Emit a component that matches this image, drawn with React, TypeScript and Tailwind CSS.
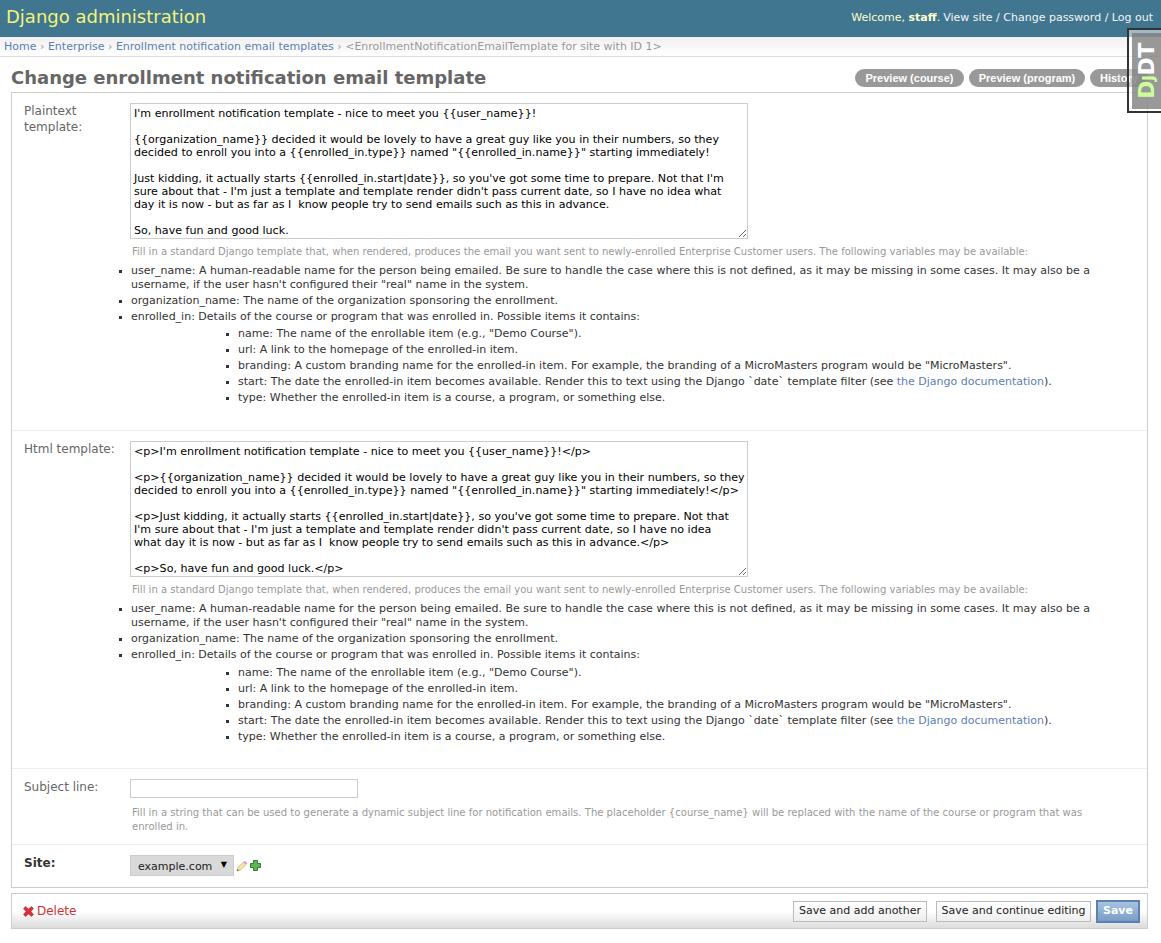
import React from 'react';

const plaintext = `I'm enrollment notification template - nice to meet you {{user_name}}!

{{organization_name}} decided it would be lovely to have a great guy like you in their numbers, so they
decided to enroll you into a {{enrolled_in.type}} named "{{enrolled_in.name}}" starting immediately!

Just kidding, it actually starts {{enrolled_in.start|date}}, so you've got some time to prepare. Not that I'm
sure about that - I'm just a template and template render didn't pass current date, so I have no idea what
day it is now - but as far as I  know people try to send emails such as this in advance.

So, have fun and good luck.`;

const html = `<p>I'm enrollment notification template - nice to meet you {{user_name}}!</p>

<p>{{organization_name}} decided it would be lovely to have a great guy like you in their numbers, so they
decided to enroll you into a {{enrolled_in.type}} named "{{enrolled_in.name}}" starting immediately!</p>

<p>Just kidding, it actually starts {{enrolled_in.start|date}}, so you've got some time to prepare. Not that
I'm sure about that - I'm just a template and template render didn't pass current date, so I have no idea
what day it is now - but as far as I  know people try to send emails such as this in advance.</p>

<p>So, have fun and good luck.</p>`;

const subjectHelp = 'Fill in a string that can be used to generate a dynamic subject line for notification emails. The placeholder {course_name} will be replaced with the name of the course or program that was enrolled in.';

const Bullet = ({ children }: { children: React.ReactNode }) => (
  <li className="relative text-[11px] leading-[14px] text-[#333]">
    <span className="absolute left-[-12px] top-[6px] w-[3px] h-[3px] bg-[#333]" />
    {children}
  </li>
);

const HelpBlock = ({ innerTop }: { innerTop: string }) => (
  <>
    <p className="mt-[6px] ml-[108px] text-[10.05px] leading-[14px] text-[#999]">
      Fill in a standard Django template that, when rendered, produces the email you want sent to newly-enrolled Enterprise Customer users. The following variables may be available:
    </p>
    <ul className="mt-[5px] ml-[107px] mr-[40px] flex flex-col gap-[2px]">
      <Bullet>user_name: A human-readable name for the person being emailed. Be sure to handle the case where this is not defined, as it may be missing in some cases. It may also be a username, if the user hasn't configured their "real" name in the system.</Bullet>
      <Bullet>organization_name: The name of the organization sponsoring the enrollment.</Bullet>
      <Bullet>enrolled_in: Details of the course or program that was enrolled in. Possible items it contains:</Bullet>
    </ul>
    <ul className={`${innerTop} ml-[214px] flex flex-col gap-[2px]`}>
      <Bullet>name: The name of the enrollable item (e.g., "Demo Course").</Bullet>
      <Bullet>url: A link to the homepage of the enrolled-in item.</Bullet>
      <Bullet>branding: A custom branding name for the enrolled-in item. For example, the branding of a MicroMasters program would be "MicroMasters".</Bullet>
      <Bullet>start: The date the enrolled-in item becomes available. Render this to text using the Django `date` template filter (see <a className="text-[#5b80b2]">the Django documentation</a>).</Bullet>
      <Bullet>type: Whether the enrolled-in item is a course, a program, or something else.</Bullet>
    </ul>
  </>
);

const TemplateRow = ({ label, value, innerTop }: { label: React.ReactNode; value: string; innerTop: string }) => (
  <div className="h-[338px] border-b border-[#eee] pl-[12px] pt-[10px]">
    <div className="flex">
      <label className="w-[94px] mr-[12px] text-[12px] leading-[16px] text-[#666]">{label}</label>
      <textarea
        readOnly
        wrap="off"
        defaultValue={value}
        className="block w-[618px] h-[136px] border border-[#ccc] bg-white px-[3px] py-[3px] text-[11.08px] leading-[13px] text-black resize overflow-hidden outline-none"
      />
    </div>
    <HelpBlock innerTop={innerTop} />
  </div>
);

const pill = "h-[18px] rounded-full bg-[#999] text-white text-[11px] font-bold leading-[18px] font-['Liberation_Sans',sans-serif]";

export default function App() {
  return (
    <div className="relative w-[1161px] h-[943px] overflow-hidden bg-white font-['DejaVu_Sans',sans-serif] text-[#333]">
      <header className="h-[37px] bg-[#417690] flex items-start justify-between pl-[6px] pr-[8px] pt-[6px]">
        <h1 className="text-[18px] leading-[22px] font-normal text-[#f4f379]">Django administration</h1>
        <div className="text-[11px] leading-[24px] text-[#ffc] flex gap-[3px]">
          <span>Welcome, <strong className="font-bold">staff</strong>.</span>
          <span className="text-[#f5f5f5]">View site / Change password / Log out</span>
        </div>
      </header>

      <div className="h-[20px] border-b border-[#ddd] bg-gradient-to-b from-[#f0f0f0] to-white pl-[4px] pt-[1px] text-[11px] leading-[18px] text-[#999] whitespace-nowrap">
        <a className="text-[#5b80b2]">Home</a> › <a className="text-[#5b80b2]">Enterprise</a> › <a className="text-[#5b80b2]">Enrollment notification email templates</a> › &lt;EnrollmentNotificationEmailTemplate for site with ID 1&gt;
      </div>

      <div className="flex items-start justify-between h-[35px] pl-[11px] pr-[13px] pt-[10px]">
        <h2 className="text-[18px] font-bold text-[#666] leading-[22px] whitespace-nowrap">Change enrollment notification email template</h2>
        <div className="flex gap-[5px] mt-[2px]">
          <a className={`${pill} w-[109px] text-center`}>Preview (course)</a>
          <a className={`${pill} w-[116px] text-center`}>Preview (program)</a>
          <a className={`${pill} w-[58px] pl-[10px]`}>History</a>
        </div>
      </div>

      <form className="ml-[11px] mr-[13px]">
        <div className="border border-[#ccc]">
          <TemplateRow label={<>Plaintext<br />template:</>} value={plaintext} innerTop="mt-[3px]" />
          <TemplateRow label="Html template:" value={html} innerTop="mt-[4px]" />
          <div className="h-[76px] border-b border-[#eee] pl-[12px] pt-[10px]">
            <div className="flex">
              <label className="w-[94px] mr-[12px] text-[12px] leading-[16px] text-[#666]">Subject line:</label>
              <input readOnly className="w-[228px] h-[19px] border border-[#ccc] bg-white outline-none" />
            </div>
            <p className="mt-[8px] ml-[108px] pr-[50px] text-[10.05px] leading-[14px] text-[#999]">{subjectHelp}</p>
          </div>
          <div className="h-[42px] pl-[12px] pt-[10px] flex">
            <label className="w-[94px] mr-[12px] text-[12px] leading-[16px] font-bold text-[#333]">Site:</label>
            <div className="flex items-start">
              <div className="w-[104px] h-[21px] bg-[#d9d9d9] border border-[#ccc] flex items-center justify-between pl-[7px] pr-[6px] pt-[3px] text-[11px] text-[#222]">
                <span>example.com</span>
                <span className="text-[8px] leading-none text-black pb-[4px]">▼</span>
              </div>
              <svg width="12" height="12" viewBox="0 0 12 12" className="ml-[2px] mt-[5px]">
                <path d="M1 11 L2 7.5 L7.5 2 L10 4.5 L4.5 10 Z" fill="#f6e3a8" stroke="#c9a860" strokeWidth="0.7" />
                <path d="M7.5 2 L8.8 .7 L11.3 3.2 L10 4.5 Z" fill="#e58fc9" />
                <path d="M1 11 L1.6 9 L3 10.4 Z" fill="#555" />
              </svg>
              <svg width="11" height="11" viewBox="0 0 11 11" className="ml-[2px] mt-[5px]">
                <path d="M3.5 .5 H7.5 V3.5 H10.5 V7.5 H7.5 V10.5 H3.5 V7.5 H.5 V3.5 H3.5 Z" fill="#62b455" stroke="#2f7d32" strokeWidth="1" />
              </svg>
            </div>
          </div>
        </div>

        <div className="mt-[5px] h-[36px] border border-[#ccc] bg-gradient-to-b from-white via-white to-[#dcdcdc] flex items-center justify-between pl-[11px] pr-[7px]">
          <a className="flex items-center gap-[3px] text-[12px] text-[#cc3434]">
            <svg width="11" height="11" viewBox="0 0 11 11">
              <path d="M2.5 .5 L5.5 3 L8.5 .5 L10.5 2.5 L8 5.5 L10.5 8.5 L8.5 10.5 L5.5 8 L2.5 10.5 L.5 8.5 L3 5.5 L.5 2.5 Z" fill="#d9303a" stroke="#a8202a" strokeWidth="0.5" />
            </svg>
            Delete
          </a>
          <div className="flex items-center">
            <button type="button" className="h-[21px] w-[134px] mr-[9px] border border-[#bbb] bg-gradient-to-b from-white to-[#eee] text-[11px] text-[#222]">Save and add another</button>
            <button type="button" className="h-[21px] w-[155px] mr-[5px] border border-[#bbb] bg-gradient-to-b from-white to-[#eee] text-[11px] text-[#222]">Save and continue editing</button>
            <button type="button" className="h-[23px] w-[44px] pt-[1px] border-2 border-[#5b80b2] bg-gradient-to-b from-[#a9c3e0] to-[#7a9dc7] text-[11px] font-bold text-white">Save</button>
          </div>
        </div>
      </form>

      <div className="absolute right-0 top-[28px] w-[34px] h-[85px] border-2 border-r-0 border-[#333] bg-white/50 pl-[3px] pt-[3px] pb-[2px]">
        <div className="h-full bg-[#777]/75 flex items-center justify-center">
          <span className="-rotate-90 whitespace-nowrap font-bold leading-none text-white text-[22px] tracking-[-0.5px]">
            <span className="text-[#cf9]">D</span>
            <span className="text-[#cf9] text-[16px]">J</span>
            DT
          </span>
        </div>
      </div>
    </div>
  );
}
